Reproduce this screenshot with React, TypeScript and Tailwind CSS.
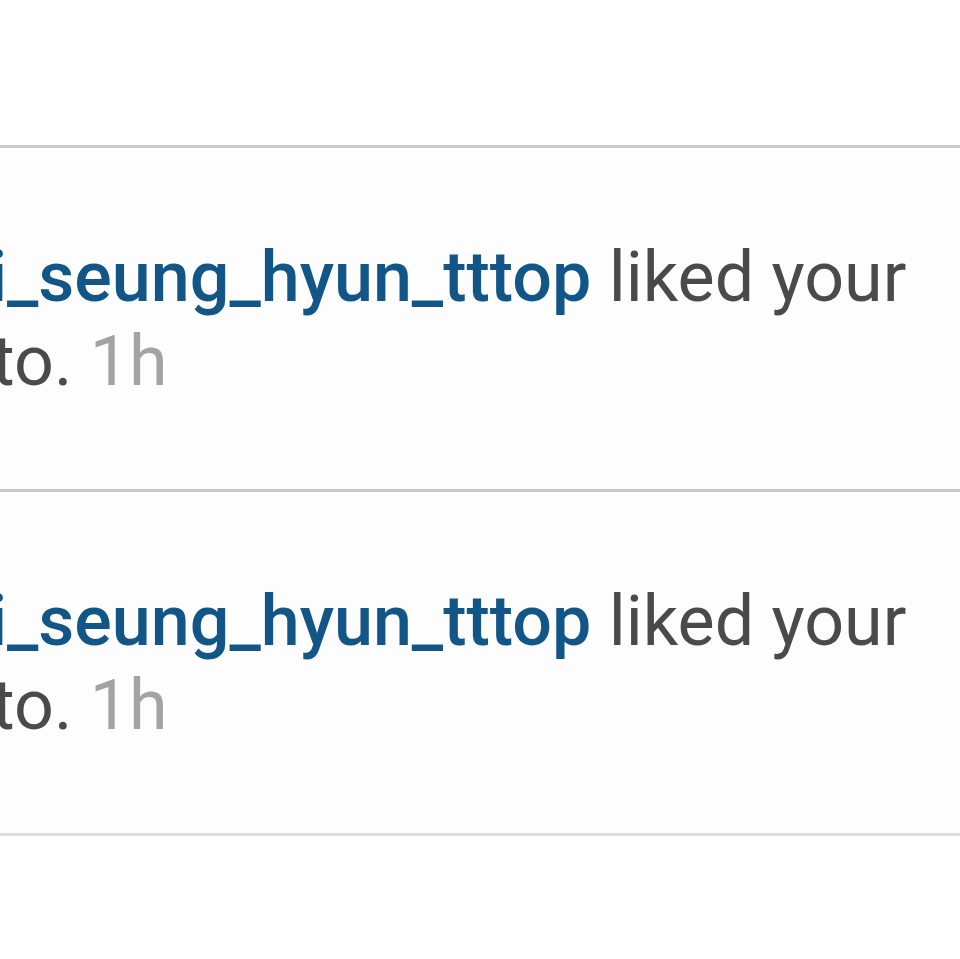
const items = [
  { user: "choi_seung_hyun_tttop", action: "liked your photo.", time: "1h" },
  { user: "choi_seung_hyun_tttop", action: "liked your photo.", time: "1h" },
];

function NotificationRow({ user, action, time }: { user: string; action: string; time: string }) {
  return (
    <div className="flex h-[344px] items-center overflow-hidden border-t-[3px] border-[#c9c9c9] bg-[#fdfdfd]">
      <p className="ml-[-126px] w-[1080px] shrink-0 text-[70px] leading-[84px] text-[#4a4a4a]">
        <span className="font-medium text-[#125688]">{user}</span> {action}{" "}
        <span className="text-[#a3a3a3]">{time}</span>
      </p>
    </div>
  );
}

export default function App() {
  return (
    <div className="h-[959px] w-[960px] overflow-hidden bg-white font-['Roboto',sans-serif]">
      <div className="h-[145px] bg-white" />
      {items.map((n, i) => (
        <NotificationRow key={i} {...n} />
      ))}
      <div className="h-[130px] border-t-[3px] border-[#dedede] bg-white" />
    </div>
  );
}
